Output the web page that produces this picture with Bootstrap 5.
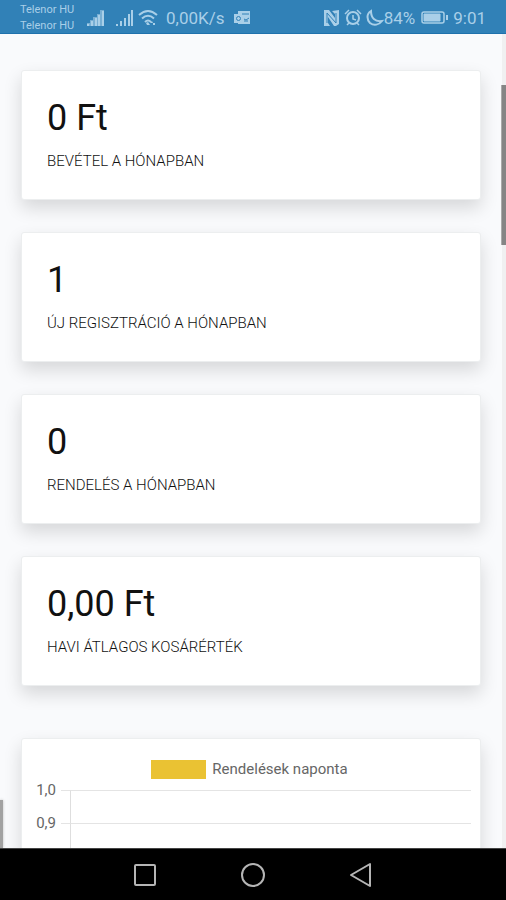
<!DOCTYPE html>
<html lang="hu">
<head>
<meta charset="utf-8">
<meta name="viewport" content="width=device-width, initial-scale=1">
<title>Áttekintés</title>
<link href="https://cdn.jsdelivr.net/npm/bootstrap@5.3.0/dist/css/bootstrap.min.css" rel="stylesheet">
<style>
  body { font-family: Roboto, "Noto Sans", sans-serif; background: #f9fafc; color: #111; }
  .status-bar { background: #3181b7; border-bottom: 1px solid #1f71ac; color: #a9cfe8; height: 34px; padding: 2px 20px 0; font-size: 17px; line-height: 20px; }
  .carriers { font-size: 11px; line-height: 16px; width: 66px; }
  .status-bar svg { display: block; flex: none; }
  .signals { gap: 4px; }
  .clock { margin-left: 4px; }
  .content { padding: 36px 25px 0 21px; gap: 32px; }
  .panel { --bs-card-border-color: #eceeef; --bs-card-border-radius: 3px; box-shadow: 0 8px 18px rgba(0, 0, 0, .14); }
  .stat { height: 130px; padding: 23px 25px; }
  .stat-value { font-size: 36px; line-height: 48px; }
  .stat-label { font-size: 15px; font-weight: 300; line-height: 20px; margin-top: 9px; color: #111; }
  .chart-panel { margin-top: 20px; padding: 20px 9px 0 14px; color: #666; font-size: 15px; line-height: 20px; }
  .legend { gap: 6px; padding-right: 8px; }
  .swatch { width: 55px; height: 19px; background: #eac233; }
  .plot { margin-top: 11px; }
  .plot-row { height: 33px; }
  .tick-label { width: 20px; margin-top: -10px; }
  .tick { width: 9px; margin-left: 5px; border-top: 1px solid #e4e4e4; }
  .cell { border-top: 1px solid #e4e4e4; border-left: 1px solid #dedede; }
  .scroll-track { position: absolute; top: 0; bottom: 0; right: 0; width: 4px; background: #f0f0f1; }
  .scroll-thumb { position: absolute; top: 51px; right: 0; width: 5px; height: 160px; background: #858585; border-left: 1px solid #aaa; }
  .drawer-edge { position: absolute; bottom: 0; left: 0; width: 3px; height: 48px; background: #a2a2a2; box-shadow: 0 0 3px #bbb; }
  .system-nav { height: 52px; background: #000; border-top: 1px solid #444; }
  .system-nav button { width: 108px; border: 0; background: none; padding: 0; }
</style>
<script src="https://cdn.jsdelivr.net/npm/bootstrap@5.3.0/dist/js/bootstrap.bundle.min.js"></script>
</head>
<body class="vh-100 d-flex flex-column overflow-hidden">
<header class="status-bar d-flex align-items-center justify-content-between flex-shrink-0">
  <div class="d-flex align-items-center">
    <div class="carriers text-nowrap">Telenor HU<br>Telenor HU</div>
    <div class="signals d-flex align-items-center">
      <svg width="26" height="18" viewBox="0 0 26 18" fill="currentColor" aria-hidden="true"><path opacity=".6" d="M1 17v-3h3v-3h3V8h4V5h3V1h4v16z"/><path d="M1 15h2v2H1zM5 12h2v5H5zM9 9h2v8H9zM12 6h2v11h-2zM16 2h2v15h-2z"/></svg>
      <svg width="18" height="18" viewBox="0 0 18 18" fill="currentColor" aria-hidden="true"><path d="M0 15h2v2H0zM4 12h2v5H4zM8 9h2v8H8zM12 5h2v12h-2zM15 1h2v16h-2z"/></svg>
      <svg width="20" height="18" viewBox="0 0 20 18" fill="none" stroke="currentColor" stroke-width="2" aria-hidden="true"><path d="M1 6Q10-2 19 6M4 9.500Q10 4 16 9.500M7 13Q10 10 13 13"/><path fill="currentColor" stroke="none" d="M8 14l2-1 2 3h-3zM12 14l2-2 1 2zM15 14h2v2h-2z"/></svg>
    </div>
    <span class="ps-1 ms-1 text-nowrap">0,00K/s</span>
    <svg class="ms-2" width="20" height="16" viewBox="0 0 20 16" aria-hidden="true"><path fill="currentColor" d="M6 1h12v13H6zM2 4h9v9H2z"/><path fill="none" stroke="#3181b7" d="M10 4h7M12 9l2 1 3-2M12 11h4"/><circle cx="6.500" cy="8.500" r="2" fill="none" stroke="#3181b7"/></svg>
  </div>
  <div class="d-flex align-items-center">
    <svg width="16" height="18" viewBox="0 0 16 18" aria-hidden="true"><path fill="currentColor" d="M0 1h5l6 8V5L8 2l7-1v14l-3 2h-2L4 8v6l2 3H0z"/><path fill="none" stroke="#3181b7" stroke-width="1" d="M3 14V4l9 10V4"/></svg>
    <svg class="ms-1" width="18" height="18" viewBox="0 0 18 18" fill="none" stroke="currentColor" stroke-width="2" aria-hidden="true"><circle cx="9" cy="9" r="6"/><path d="M9 6v4l3 1M1 5l4-4M17 5l-4-4M5 14l-2 2M13 14l2 2" stroke-width="1.500"/></svg>
    <svg class="ms-1" width="18" height="18" viewBox="0 0 18 18" fill="none" stroke="currentColor" stroke-width="2" aria-hidden="true"><path d="M5 2C0 5 1 11 4 14 8 17 13 16 16 12 9 13 5 9 5 2z"/></svg>
    <span>84%</span>
    <svg class="ms-1" width="30" height="14" viewBox="0 0 30 14" fill="none" stroke="currentColor" aria-hidden="true"><rect x="3" y="1" width="22" height="11" rx="2" stroke-width="1.500"/><path fill="currentColor" d="M5 3h16v7H5z"/><path d="M28 4v5" stroke-width="2"/></svg>
    <span class="clock">9:01</span>
  </div>
</header>
<main class="position-relative flex-grow-1 overflow-hidden">
  <div class="content d-flex flex-column">
    <section class="card panel stat"><div class="stat-value">0 Ft</div><div class="stat-label">BEVÉTEL A HÓNAPBAN</div></section>
    <section class="card panel stat"><div class="stat-value">1</div><div class="stat-label">ÚJ REGISZTRÁCIÓ A HÓNAPBAN</div></section>
    <section class="card panel stat"><div class="stat-value">0</div><div class="stat-label">RENDELÉS A HÓNAPBAN</div></section>
    <section class="card panel stat"><div class="stat-value">0,00 Ft</div><div class="stat-label">HAVI ÁTLAGOS KOSÁRÉRTÉK</div></section>
    <section class="card panel chart-panel">
      <div class="legend d-flex justify-content-center align-items-center"><span class="swatch"></span><span>Rendelések naponta</span></div>
      <div class="plot">
        <div class="plot-row d-flex"><span class="tick-label text-end">1,0</span><span class="tick"></span><span class="cell flex-grow-1"></span></div>
        <div class="plot-row d-flex"><span class="tick-label text-end">0,9</span><span class="tick"></span><span class="cell flex-grow-1"></span></div>
      </div>
    </section>
  </div>
  <div class="scroll-track"></div>
  <div class="scroll-thumb"></div>
  <div class="drawer-edge"></div>
</main>
<nav class="system-nav d-flex justify-content-center flex-shrink-0" aria-label="Rendszer">
  <button type="button" aria-label="Alkalmazások"><svg width="26" height="26" viewBox="0 0 26 26" fill="none" stroke="#b5b5b5" stroke-width="2"><rect x="3" y="3" width="20" height="20" rx="1"/></svg></button>
  <button type="button" aria-label="Kezdőlap"><svg width="26" height="26" viewBox="0 0 26 26" fill="none" stroke="#b5b5b5" stroke-width="2"><circle cx="13" cy="13" r="11"/></svg></button>
  <button type="button" aria-label="Vissza"><svg width="26" height="26" viewBox="0 0 26 26" fill="none" stroke="#b5b5b5" stroke-width="2" stroke-linejoin="round"><path d="M22 2v22L3 13z"/></svg></button>
</nav>
</body>
</html>
